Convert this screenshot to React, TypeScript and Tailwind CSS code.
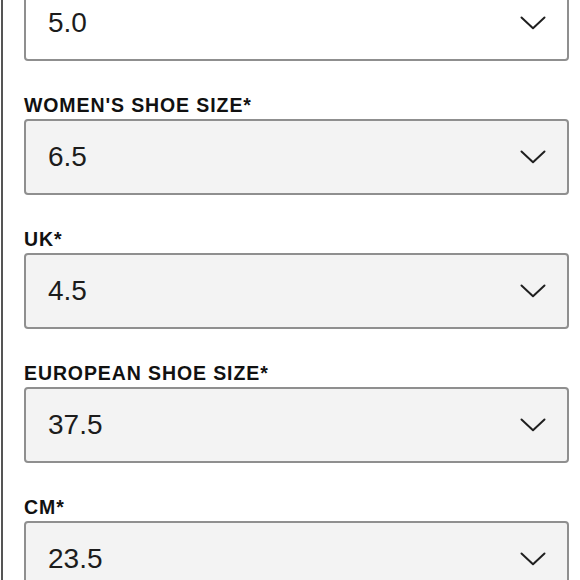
interface SizeField {
  label?: string;
  value: string;
  active?: boolean;
}

const FIELDS: SizeField[] = [
  { value: "5.0", active: true },
  { label: "WOMEN'S SHOE SIZE*", value: "6.5" },
  { label: "UK*", value: "4.5" },
  { label: "EUROPEAN SHOE SIZE*", value: "37.5" },
  { label: "CM*", value: "23.5" },
];

function Chevron() {
  return (
    <svg width="26" height="14" viewBox="0 0 26 14" fill="none" className="text-[#1f1f1f]">
      <path d="M1.5 1.5 L13 12.2 L24.5 1.5" stroke="currentColor" strokeWidth="2" strokeLinecap="round" strokeLinejoin="round" />
    </svg>
  );
}

function SizeSelect({ label, value, active }: SizeField) {
  return (
    <div>
      {label && (
        <div className="mt-[33px] mb-[3px] text-[19.5px] leading-[22px] font-bold tracking-[0.9px] text-[#111]">
          {label}
        </div>
      )}
      <div
        className={`flex h-[76px] items-center justify-between rounded-[4px] border-2 border-[#8f8f8f] pl-[22px] pr-[21px] ${
          active ? "bg-white" : "bg-[#f3f3f3]"
        }`}
      >
        <span className="text-[28px] text-[#1c1c1c]">{value}</span>
        <Chevron />
      </div>
    </div>
  );
}

export default function App() {
  return (
    <div className="h-[580px] overflow-hidden bg-white pl-[1px] font-['Liberation_Sans',Arial,sans-serif]">
      <div className="min-h-[600px] border-l-2 border-[#555] pl-[21px] pr-[11px]">
        <div className="-mt-[15px]">
          {FIELDS.map((f, i) => (
            <SizeSelect key={i} {...f} />
          ))}
        </div>
      </div>
    </div>
  );
}
